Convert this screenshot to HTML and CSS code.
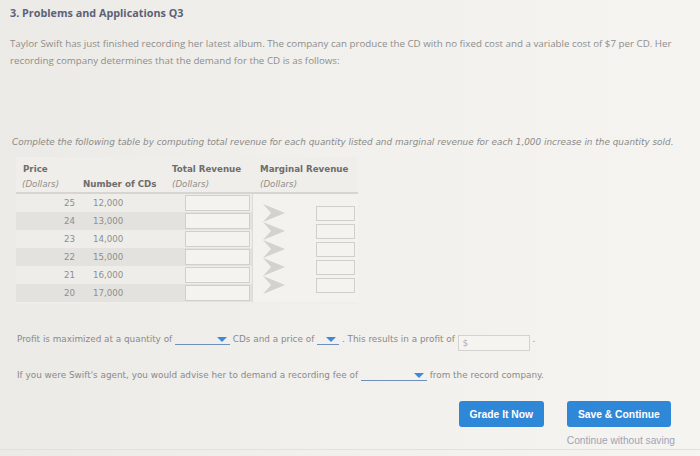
FILE: index.html
```html
<!DOCTYPE html>
<html>
<head>
<meta charset="utf-8">
<link rel="stylesheet" href="styles.css">
</head>
<body>
<main class="page">
  <h1 class="title">3. Problems and Applications Q3</h1>
  <p class="intro">Taylor Swift has just finished recording her latest album. The company can produce the CD with no fixed cost and a variable cost of $7 per CD. Her recording company determines that the demand for the CD is as follows:</p>
  <p class="instr">Complete the following table by computing total revenue for each quantity listed and marginal revenue for each 1,000 increase in the quantity sold.</p>

  <div class="table">
    <div class="thead">
      <div class="h h-price"><b>Price</b><i>(Dollars)</i></div>
      <div class="h h-num"><span></span><b>Number of CDs</b></div>
      <div class="h h-tr"><b>Total Revenue</b><i>(Dollars)</i></div>
      <div class="h h-mr"><b>Marginal Revenue</b><i>(Dollars)</i></div>
    </div>
    <div class="tbody">
      <div class="rows">
        <div class="row"><span class="c-price">25</span><span class="c-num">12,000</span><span class="c-tr"><span class="box"></span></span></div>
        <div class="row dark"><span class="c-price">24</span><span class="c-num">13,000</span><span class="c-tr"><span class="box"></span></span></div>
        <div class="row"><span class="c-price">23</span><span class="c-num">14,000</span><span class="c-tr"><span class="box"></span></span></div>
        <div class="row dark"><span class="c-price">22</span><span class="c-num">15,000</span><span class="c-tr"><span class="box"></span></span></div>
        <div class="row"><span class="c-price">21</span><span class="c-num">16,000</span><span class="c-tr"><span class="box"></span></span></div>
        <div class="row dark"><span class="c-price">20</span><span class="c-num">17,000</span><span class="c-tr"><span class="box"></span></span></div>
      </div>
      <div class="mr">
        <div class="mr-item"><svg class="chev" width="23" height="18" viewBox="0 0 23 18"><polygon points="0,0 22,9 0,18 8,9"/></svg><span class="box small"></span></div>
        <div class="mr-item"><svg class="chev" width="23" height="18" viewBox="0 0 23 18"><polygon points="0,0 22,9 0,18 8,9"/></svg><span class="box small"></span></div>
        <div class="mr-item"><svg class="chev" width="23" height="18" viewBox="0 0 23 18"><polygon points="0,0 22,9 0,18 8,9"/></svg><span class="box small"></span></div>
        <div class="mr-item"><svg class="chev" width="23" height="18" viewBox="0 0 23 18"><polygon points="0,0 22,9 0,18 8,9"/></svg><span class="box small"></span></div>
        <div class="mr-item"><svg class="chev" width="23" height="18" viewBox="0 0 23 18"><polygon points="0,0 22,9 0,18 8,9"/></svg><span class="box small"></span></div>
      </div>
    </div>
  </div>

  <p class="q q1">Profit is maximized at a quantity of <span class="dd dd1"><span class="tri"></span></span> CDs and a price of <span class="dd dd2"><span class="tri"></span></span> . This results in a profit of <span class="money">$</span> .</p>
  <p class="q q2">If you were Swift's agent, you would advise her to demand a recording fee of <span class="dd dd3"><span class="tri"></span></span> from the record company.</p>

  <div class="actions">
    <button class="btn grade">Grade It Now</button>
    <div class="save-col">
      <button class="btn save">Save &amp; Continue</button>
      <span class="skip">Continue without saving</span>
    </div>
  </div>
</main>
</body>
</html>
```

FILE: styles.css
```css
html, body {
  margin: 0;
  padding: 0;
}
body {
  width: 700px;
  height: 456px;
  overflow: hidden;
  background: linear-gradient(90deg, #ebeae6 0%, #f1f0ec 45%, #f5f4f1 100%);
  font-family: "DejaVu Sans", Verdana, sans-serif;
  color: #8c8c8a;
}
.page {
  height: 449px;
  border-bottom: 1px solid #e2e1dd;
  display: flex;
  flex-direction: column;
}
.title {
  margin: 7px 0 0 10px;
  font-family: "Open Sans", sans-serif;
  font-size: 10.8px;
  line-height: 12px;
  font-weight: 700;
  color: #5d6277;
}
.intro {
  margin: 16px 10px 0 10px;
  font-family: "Open Sans", sans-serif;
  font-size: 9.75px;
  line-height: 17px;
  color: #8e8e8c;
}
.instr {
  margin: 65px 0 0 12px;
  font-size: 8.9px;
  line-height: 17px;
  font-style: italic;
  color: #8a8a88;
  white-space: nowrap;
}
.table {
  margin: 6px 0 0 16px;
  width: 342px;
  display: flex;
  flex-direction: column;
  background: #efeeea;
  padding-bottom: 2px;
}
.thead {
  display: grid;
  grid-template-columns: 64px 90px 82px 106px;
  padding-top: 5px;
  border-bottom: 2px solid #d6d5d1;
}
.h {
  display: flex;
  flex-direction: column;
  font-size: 8.7px;
  line-height: 15px;
}
.h b {
  color: #6d6d6b;
  font-weight: 700;
  white-space: nowrap;
}
.h i {
  color: #8f8f8d;
  white-space: nowrap;
}
.h-price { padding-left: 7px; }
.h-price i { margin-left: -1px; }
.h-num span { height: 15px; }
.h-num b { margin-left: 3px; }
.h-tr b, .h-tr i { margin-left: 2px; }
.h-mr { padding-left: 8px; }
.tbody {
  display: flex;
}
.rows {
  width: 236px;
  display: flex;
  flex-direction: column;
}
.row {
  height: 18px;
  display: grid;
  grid-template-columns: 64px 90px 82px;
  align-items: center;
  font-size: 8.7px;
  background: #eeede9;
}
.row.dark {
  background: #e3e2de;
}
.c-price {
  text-align: right;
  padding-right: 5px;
  color: #8f8f8d;
}
.c-num {
  padding-left: 13px;
  color: #8f8f8d;
}
.c-tr {
  display: flex;
  padding-left: 15px;
}
.box {
  display: block;
  width: 63px;
  height: 14px;
  border: 1px solid #d0cfcb;
  background: #f4f3f0;
}
.mr {
  width: 105px;
  border-left: 1px solid #dcdbd7;
  background: #f3f2ee;
  display: flex;
  flex-direction: column;
  padding-top: 10px;
}
.mr-item {
  height: 18px;
  display: flex;
  align-items: center;
  padding-left: 10px;
}
.chev {
  display: block;
  fill: #d3d2cf;
}
.box.small {
  width: 37px;
  height: 13px;
  margin-left: 30px;
}
.q {
  margin: 0 0 0 17px;
  font-size: 8.85px;
  line-height: 17px;
  color: #8a8a88;
  white-space: nowrap;
}
.q1 { margin-top: 27px; }
.q2 { margin-top: 16px; }
.dd {
  display: inline-block;
  position: relative;
  height: 11px;
  vertical-align: -3px;
  border-bottom: 1px solid #6f90bd;
}
.dd1 { width: 55px; }
.dd2 { width: 22px; }
.dd3 { width: 66px; }
.tri {
  position: absolute;
  right: 3px;
  top: 4px;
  width: 0;
  height: 0;
  border-left: 5px solid transparent;
  border-right: 5px solid transparent;
  border-top: 5px solid #3f8ad8;
}
.money {
  display: inline-block;
  width: 66px;
  height: 14px;
  line-height: 14px;
  padding-left: 4px;
  border: 1px solid #d3d2ce;
  background: #f5f4f1;
  color: #9fb0c8;
  vertical-align: -4px;
}
.actions {
  margin-top: 17px;
  display: flex;
  justify-content: flex-end;
  align-items: flex-start;
  gap: 23px;
  padding-right: 25px;
}
.save-col {
  display: flex;
  flex-direction: column;
  align-items: flex-start;
}
.btn {
  height: 26px;
  border: none;
  border-radius: 3px;
  background: #2f87d8;
  color: #ffffff;
  font-family: "Liberation Sans", Arial, sans-serif;
  font-weight: 700;
  font-size: 10.3px;
  padding: 0;
}
.grade { width: 85px; }
.save { width: 104px; }
.skip {
  margin-top: 8px;
  font-family: "Liberation Sans", Arial, sans-serif;
  font-size: 10.2px;
  line-height: 12px;
  color: #9ea3b6;
  white-space: nowrap;
}
```
